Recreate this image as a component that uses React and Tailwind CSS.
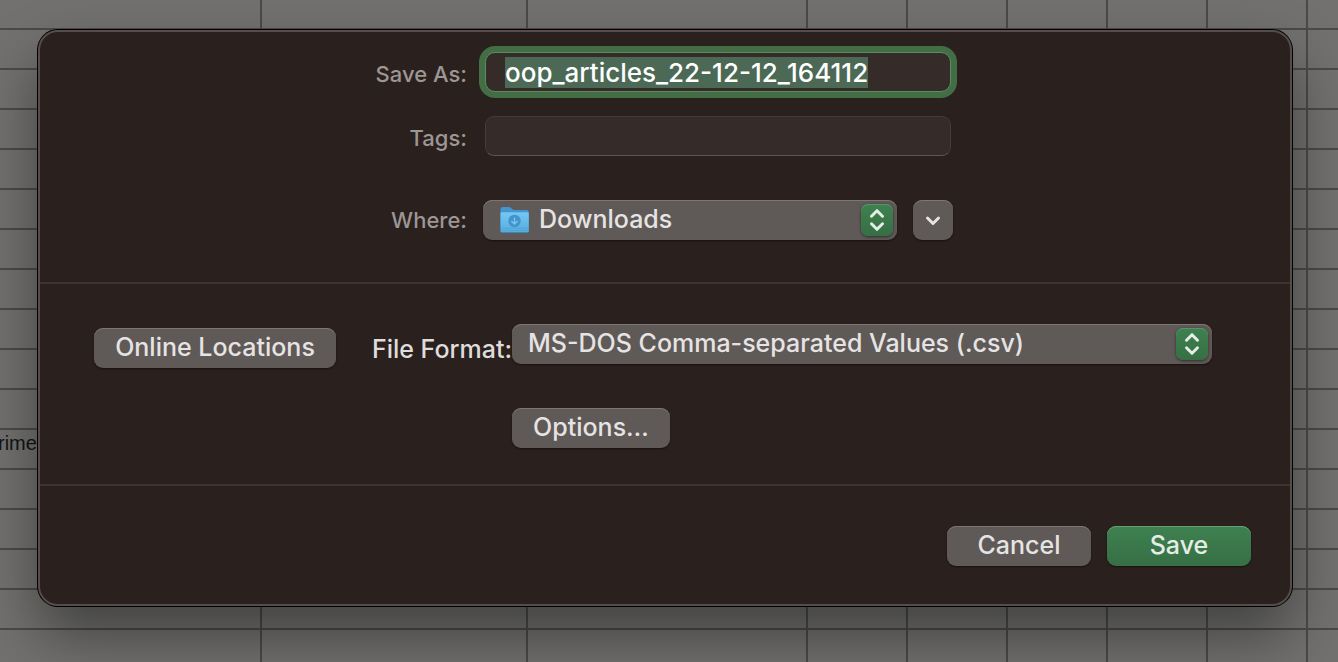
import { useEffect, useRef } from "react";

const COLUMNS = 9;
const ROWS = 40;
const TEXT_ROW = 11;

const BUTTON =
  "h-10 rounded-[9px] bg-[#5f5957] pb-0.5 text-[25px] leading-8 font-medium text-[#e6e4e3] shadow-[inset_0_1px_0_#7c7674,0_1px_2px_rgba(0,0,0,0.45)]";
const SELECT =
  "h-10 w-full appearance-none rounded-[9px] bg-[#5f5957] pb-0.5 text-[25px] leading-8 font-medium text-[#e6e4e3] shadow-[inset_0_1px_0_#7c7674,0_1px_2px_rgba(0,0,0,0.45)] outline-none";

function Sheet() {
  return (
    <div className="absolute inset-0 overflow-hidden bg-[#727170]">
      <table className="w-full table-fixed border-separate border-spacing-0">
        <colgroup>
          <col className="w-[262px]" />
          <col className="w-[266px]" />
          <col className="w-[280px]" />
          <col className="w-[100px]" />
          <col className="w-[100px]" />
          <col className="w-[100px]" />
          <col className="w-[100px]" />
          <col className="w-[100px]" />
          <col />
        </colgroup>
        <tbody>
          {Array.from({ length: ROWS }, (_, row) => (
            <tr key={row} className={row === 0 ? "h-[30px]" : "h-10"}>
              {Array.from({ length: COLUMNS }, (_, col) => (
                <td
                  key={col}
                  className="border-r-2 border-b-2 border-[#4b4a49] p-0 align-top font-['Liberation_Sans',sans-serif] text-[20px] leading-[26px] text-[#141414] last:border-r-0"
                >
                  {row === TEXT_ROW && col === 0 ? (
                    <span className="-ml-0.5">rime</span>
                  ) : null}
                </td>
              ))}
            </tr>
          ))}
        </tbody>
      </table>
    </div>
  );
}

function Stepper() {
  return (
    <span className="pointer-events-none absolute top-1 right-1 flex size-8 items-center justify-center rounded-[7px] bg-linear-to-b from-[#3f8150] to-[#366f44] shadow-[inset_0_1px_0_#5b9369,0_1px_3px_rgba(0,0,0,0.5)]">
      <svg
        viewBox="0 0 32 32"
        className="size-8"
        fill="none"
        stroke="#e4ede6"
        strokeWidth="3"
        strokeLinecap="round"
        strokeLinejoin="round"
        aria-hidden="true"
      >
        <path d="M10.500 12.200 16 6.700l5.500 5.500M10.500 19.800l5.500 5.500 5.500-5.500" />
      </svg>
    </span>
  );
}

function DownloadsFolder() {
  return (
    <svg
      viewBox="0 0 30 28"
      className="pointer-events-none absolute top-1.5 left-4 h-7 w-[30px]"
      aria-hidden="true"
    >
      <defs>
        <linearGradient id="folder-front" x1="0" y1="0" x2="0" y2="1">
          <stop offset="0" stopColor="#76c8f3" />
          <stop offset="1" stopColor="#56abe0" />
        </linearGradient>
      </defs>
      <path d="M1.500 3.500Q1.500 1 4 1H9.500q1.500 0 2.500 1l1.300 1.200q1 .8 2.400.8H27.500q2.300 0 2.300 2.200V20H1.500Z" fill="#4596d0" />
      <path d="M1.500 25.500V7.800Q1.500 6.700 2.700 6.700H28.500q1.300 0 1.300 1.100v17.700q0 1.500-1.500 1.500H3Q1.500 27 1.500 25.500Z" fill="#3878a3" />
      <path d="M1.500 25V7.500Q1.500 6.300 2.700 6.300H28.500q1.300 0 1.300 1.200V25q0 1.300-1.500 1.300H3Q1.500 26.300 1.500 25Z" fill="url(#folder-front)" />
      <path d="M1.500 22.200h28.300M1.500 24.500h28.300" stroke="#4c9fd4" strokeWidth=".6" />
      <circle cx="15.500" cy="15" r="6.200" fill="#4294cc" />
      <path d="M15.500 12v6M12.800 15.400l2.700 2.700 2.700-2.700" fill="none" stroke="#79c5ef" strokeWidth="1.400" strokeLinecap="round" strokeLinejoin="round" />
    </svg>
  );
}

export default function App() {
  const nameRef = useRef(null);

  useEffect(() => {
    nameRef.current.focus();
    nameRef.current.select();
  }, []);

  return (
    <main className="relative min-h-screen overflow-hidden pt-[30px] pr-[46px] pb-14 pl-[38px] font-['Inter',sans-serif]">
      <Sheet />
      <form
        aria-label="Save"
        onSubmit={(event) => event.preventDefault()}
        className="relative rounded-[20px] border-2 border-[#564d4b] bg-[#2a201e] shadow-[0_0_0_1px_#000,0_30px_60px_rgba(0,0,0,0.42)]"
      >
        <section className="grid grid-cols-[90px_470px] items-center justify-center gap-x-4 border-b-2 border-[#3d3432] pt-5 pb-[42px]">
          <label htmlFor="name" className="flex justify-end pt-1 text-[22px] leading-8 font-medium whitespace-nowrap text-[#9c9694]">
            Save As:
          </label>
          <div className="px-0.5">
            <input
              id="name"
              ref={nameRef}
              type="text"
              defaultValue="oop_articles_22-12-12_164112"
              className="h-10 w-full rounded-[10px] border border-[#5c8d60] bg-[#352b29] px-[19px] text-[26px] leading-8 font-medium text-white ring-6 ring-[#436e45] outline-none selection:bg-[#4c6a56]/99 selection:text-white"
            />
          </div>
          <label htmlFor="tags" className="mt-6 flex justify-end pt-1 text-[22px] leading-8 font-medium whitespace-nowrap text-[#9c9694]">
            Tags:
          </label>
          <div className="mt-6 px-0.5">
            <input
              id="tags"
              type="text"
              className="h-10 w-full rounded-[9px] border border-[#453b39] border-b-[#5f5654] bg-[#352b29] px-[19px] text-[26px] leading-8 font-medium text-white outline-none"
            />
          </div>
          <label htmlFor="where" className="mt-11 flex justify-end text-[22px] leading-8 font-medium whitespace-nowrap text-[#9c9694]">
            Where:
          </label>
          <div className="mt-11 flex gap-4">
            <div className="relative flex-1">
              <select id="where" className={`${SELECT} pr-12 pl-14`}>
                <option>Downloads</option>
              </select>
              <DownloadsFolder />
              <Stepper />
            </div>
            <button
              type="button"
              aria-label="Show more"
              className="size-10 rounded-[9px] bg-[#5f5957] shadow-[inset_0_1px_0_#7c7674,0_1px_2px_rgba(0,0,0,0.45)]"
            >
              <svg
                viewBox="0 0 40 40"
                className="size-10"
                fill="none"
                stroke="#e6e4e3"
                strokeWidth="3"
                strokeLinecap="round"
                strokeLinejoin="round"
                aria-hidden="true"
              >
                <path d="m14.500 18 5.500 5.500 5.500-5.500" />
              </svg>
            </button>
          </div>
        </section>

        <section className="flex items-start border-b-2 border-[#3d3432] pt-10 pr-[78px] pb-9 pl-[54px]">
          <button type="button" className={`${BUTTON} mt-1 w-[242px] shrink-0 whitespace-nowrap`}>
            Online Locations
          </button>
          <label
            htmlFor="format"
            className="mt-1 w-44 shrink-0 pt-[5px] text-right text-[25px] leading-8 font-medium whitespace-nowrap text-[#dfdddc]"
          >
            File Format:
          </label>
          <div className="flex min-w-0 flex-1 flex-col items-start gap-11">
            <div className="relative w-full">
              <select id="format" className={`${SELECT} pr-12 pl-4`}>
                <option>MS-DOS Comma-separated Values (.csv)</option>
              </select>
              <Stepper />
            </div>
            <button type="button" className={`${BUTTON} w-[158px]`}>
              Options…
            </button>
          </div>
        </section>

        <footer className="flex justify-end gap-4 pt-10 pr-[39px] pb-[38px]">
          <button type="button" className={`${BUTTON} w-36`}>
            Cancel
          </button>
          <button
            type="submit"
            className="h-10 w-36 rounded-[9px] bg-linear-to-b from-[#3f8150] to-[#366f44] pb-0.5 text-[25px] leading-8 font-medium text-[#e4ede6] shadow-[inset_0_1px_0_#6a9f77,0_1px_2px_rgba(0,0,0,0.45)]"
          >
            Save
          </button>
        </footer>
      </form>
    </main>
  );
}
